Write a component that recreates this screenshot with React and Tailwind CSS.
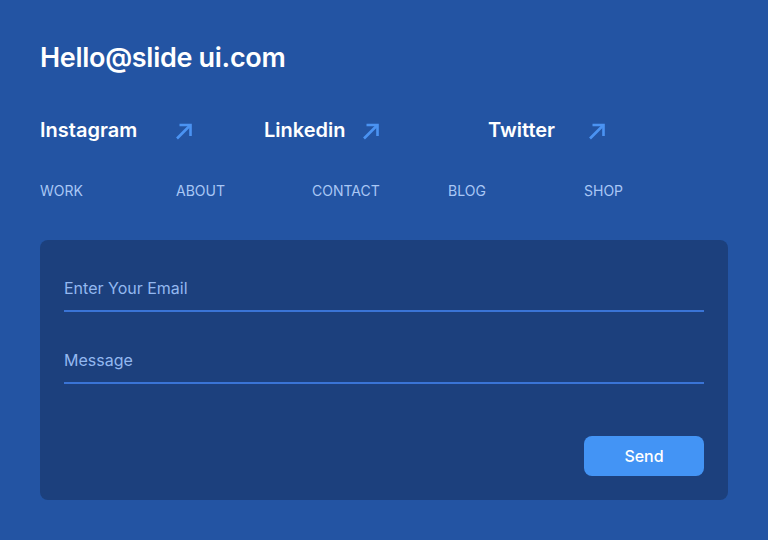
const socials = [
  { name: "Instagram", gap: "ml-[38px]" },
  { name: "Linkedin", gap: "ml-[16px]" },
  { name: "Twitter", gap: "ml-[33px]" },
];

const links = ["WORK", "ABOUT", "CONTACT", "BLOG", "SHOP"];

function Arrow({ className }) {
  return (
    <svg
      width="18"
      height="17"
      viewBox="0 0 18 17"
      fill="none"
      stroke="#4b93f2"
      strokeWidth="2.6"
      strokeLinecap="butt"
      className={className}
    >
      <path d="M2 15.5 L15.5 2" />
      <path d="M4.5 2 H15.5 V13" />
    </svg>
  );
}

export default function App() {
  return (
    <div
      className="w-[768px] h-[540px] bg-[#2354a3] px-10 pt-[40px] text-white"
      style={{ fontFamily: "Inter, 'Liberation Sans', sans-serif" }}
    >
      {/* TITLE */}
      <h1 className="text-[27px] font-semibold leading-[36px] tracking-[-0.3px]">
        Hello@slide ui.com
      </h1>

      {/* SOCIALS */}
      <div className="flex mt-[40px]">
        {socials.map((s) => (
          <div key={s.name} className="flex items-center w-[224px]">
            <span className="text-[20px] font-semibold leading-[28px]">{s.name}</span>
            <Arrow className={`${s.gap} mt-[2px]`} />
          </div>
        ))}
      </div>

      {/* NAV */}
      <div className="flex mt-[37px]">
        {links.map((l) => (
          <a key={l} className="w-[136px] text-[14px] leading-[20px] text-[#a9c7f5]">
            {l}
          </a>
        ))}
      </div>

      {/* FORM */}
      <div className="mt-[39px] bg-[#1c407d] rounded-lg px-6 pt-[36px] pb-6 h-[260px] flex flex-col">
        <input
          placeholder="Enter Your Email"
          className="w-full bg-transparent border-b-2 border-[#3a74d6] pb-[10px] text-[16px] leading-[24px] text-white placeholder-[#93b8f0] outline-none"
        />
        <input
          placeholder="Message"
          className="w-full mt-[36px] bg-transparent border-b-2 border-[#3a74d6] pb-[10px] text-[16px] leading-[24px] text-white placeholder-[#93b8f0] outline-none"
        />
        <div className="flex justify-end mt-auto">
          <button className="w-[120px] h-[40px] rounded-lg bg-[#4394f5] text-[16px] font-medium text-white">
            Send
          </button>
        </div>
      </div>
    </div>
  );
}
